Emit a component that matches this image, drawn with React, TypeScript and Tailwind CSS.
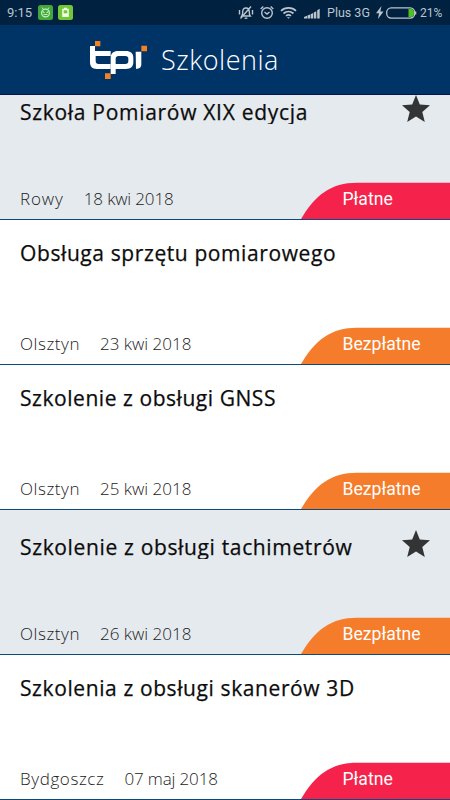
import React from 'react';

interface Training {
  title: string;
  city: string;
  date: string;
  paid: boolean;
  starred: boolean;
  tracking: string;
  cityTracking: string;
  dateTracking: string;
}

const trainings: Training[] = [
  { title: 'Szkoła Pomiarów XIX edycja', city: 'Rowy', date: '18 kwi 2018', paid: true, starred: true, tracking: 'tracking-[0.7px]', cityTracking: 'tracking-[0.9px]', dateTracking: 'tracking-[-0.15px]' },
  { title: 'Obsługa sprzętu pomiarowego', city: 'Olsztyn', date: '23 kwi 2018', paid: false, starred: false, tracking: 'tracking-[0.6px]', cityTracking: 'tracking-[0.55px]', dateTracking: 'tracking-[0px]' },
  { title: 'Szkolenie z obsługi GNSS', city: 'Olsztyn', date: '25 kwi 2018', paid: false, starred: false, tracking: 'tracking-[0.55px]', cityTracking: 'tracking-[0.55px]', dateTracking: 'tracking-[0px]' },
  { title: 'Szkolenie z obsługi tachimetrów', city: 'Olsztyn', date: '26 kwi 2018', paid: false, starred: true, tracking: 'tracking-[0.65px]', cityTracking: 'tracking-[0.55px]', dateTracking: 'tracking-[0px]' },
  { title: 'Szkolenia z obsługi skanerów 3D', city: 'Bydgoszcz', date: '07 maj 2018', paid: true, starred: false, tracking: 'tracking-[0.6px]', cityTracking: 'tracking-[0.6px]', dateTracking: 'tracking-[-0.15px]' },
];

const StatusBar: React.FC = () => (
  <div className="flex h-[25px] shrink-0 items-center bg-[#00213f] pl-[7px] pr-[7px] font-[Roboto,sans-serif] text-[13px] text-[#bcc5ce]">
    <span className="w-[31px] leading-[25px] whitespace-nowrap">9:15</span>
    <svg className="h-[15px] w-[15px]" viewBox="0 0 15 15">
      <rect width="15" height="15" rx="2.5" fill="#43a83c" />
      <path d="M4 2.500l1.500 2M11 2.500L9.500 4.500" stroke="#c9efc4" strokeWidth="1" />
      <circle cx="7.500" cy="8" r="3.900" fill="none" stroke="#c9efc4" strokeWidth="1.200" />
      <path d="M4.500 6.500l2 1.200M10.500 6.500l-2 1.200M5.500 9.500h4" stroke="#c9efc4" strokeWidth="1.100" />
    </svg>
    <svg className="ml-[5px] h-[15px] w-[15px]" viewBox="0 0 15 15">
      <rect width="15" height="15" rx="2.500" fill="#71c837" />
      <path d="M6 2.800h3v1h1.800v8.200H4.200V3.800H6z" fill="#f3fbe9" />
      <rect x="5.700" y="5.300" width="3.600" height="3" fill="#71c837" />
    </svg>

    <div className="ml-auto flex items-center">
      <svg className="h-[15px] w-[16px]" viewBox="0 0 16 15" fill="none" stroke="#bcc5ce" strokeWidth="1.400">
        <path d="M3.800 11c.9-1 .9-2 .9-4C4.700 4.800 6 3 8 3s3.300 1.800 3.300 4c0 2 0 3 .9 4zM6.700 12.800c.7.700 1.900.7 2.600 0M13 1.500l-10.500 12M1.500 5v4.500M14.500 5v4.500" />
      </svg>
      <svg className="ml-[6px] h-[15px] w-[14px]" viewBox="0 0 14 15" fill="none" stroke="#bcc5ce" strokeWidth="1.400">
        <circle cx="7" cy="8" r="5.300" />
        <path d="M4.500 7L7 9l2.500-2M.7 4l2.600-2.400M13.300 4l-2.600-2.400" />
      </svg>
      <svg className="ml-[6px] h-[13px] w-[17px]" viewBox="0 0 17 13" fill="none" stroke="#bcc5ce" strokeWidth="1.700">
        <path d="M1 4.800c4-4 11-4 15 0M3.500 7.500c3-2.600 7-2.600 10 0M6 9.800c1.500-1.200 3.500-1.200 5 0" />
        <path d="M7 11.200h3L8.500 12.800z" fill="#bcc5ce" stroke="none" />
      </svg>
      <svg className="ml-[7px] h-[12px] w-[17px]" viewBox="0 0 17 12" fill="#bcc5ce">
        <path d="M0 11.500V10l3-1.200v2.700zM3.500 8.600l2.500-1v3.900H3.500zM6.600 7.200l2.500-1.200v5.500H6.600zM9.800 5.400l2.500-1.200v7.300H9.800zM13.200 3.300l2.500-1.500v9.700h-2.500z" />
      </svg>
      <span className="ml-[6px] w-[44px] pt-px text-[12.5px] whitespace-nowrap">Plus 3G</span>
      <svg className="ml-[5px] h-[13px] w-[8px]" viewBox="0 0 8 13" fill="#bcc5ce">
        <path d="M5.500 0L0 7.300h3L2 13l5.500-7.500H4.300z" />
      </svg>
      <svg className="ml-[2px] h-[12px] w-[31px]" viewBox="0 0 31 12">
        <rect x=".7" y=".8" width="28" height="10.300" rx="4.500" fill="none" stroke="#bcc5ce" strokeWidth="1.300" />
        <path d="M22.500 2h2.700c1.500 0 2.700 1.200 2.700 2.700v2.500c0 1.500-1.200 2.700-2.700 2.700h-2.700z" fill="#4fc31b" />
        <path d="M29 4.500h1.300v3H29z" fill="#bcc5ce" />
      </svg>
      <span className="ml-[3px] w-[23px] pt-px text-[12px] whitespace-nowrap">21%</span>
    </div>
  </div>
);

const Logo: React.FC = () => (
  <svg className="h-[40px] w-[60px]" viewBox="27 30 180 120">
    <path
      d="M30 48H45V63H92V78H47V93C47 99 50 102 56 102H92V117H50C37 117 30 110 30 97Z"
      fill="#fff"
    />
    <path
      fillRule="evenodd"
      d="M92 132V85C92 70 100 63 115 63H137C152 63 160 70 160 83V97C160 110 152 117 138 117H107V132ZM107 102H136C142 102 145 99 145 94V86C145 81 142 78 136 78H116C110 78 107 81 107 86Z"
      fill="#fff"
    />
    <path d="M167 65H184V103C184 112 179 117 168 117Z" fill="#fff" />
    <path d="M45 33h16v16H45zM184 47h17v17h-17zM75 130h17v17H75z" fill="#f58220" />
  </svg>
);

const Header: React.FC = () => (
  <header className="flex h-[70px] shrink-0 items-center border-b border-[#00164d] bg-[#003366] pl-[89px]">
    <Logo />
    <h1 className="ml-[12px] font-['Open_Sans',sans-serif] text-[27px] leading-[40px] font-light tracking-[0.5px] text-white">
      Szkolenia
    </h1>
  </header>
);

const Tag: React.FC<{ paid: boolean }> = ({ paid }) => (
  <div className="relative h-[37px] w-[149px]">
    <svg className="absolute inset-0" width="149" height="37" viewBox="0 0 149 37">
      <path d="M0 37C14 13 30 .7 56 .7H149V37Z" fill={paid ? '#f5234b' : '#f57c2a'} />
    </svg>
    <span className="relative block pl-[41.5px] font-[Roboto,sans-serif] text-[17.6px] leading-[35px] text-white">
      {paid ? 'Płatne' : 'Bezpłatne'}
    </span>
  </div>
);

const TrainingRow: React.FC<{ item: Training }> = ({ item }) => (
  <li
    className={`flex h-[145px] shrink-0 flex-col justify-between border-b border-[#0b4a7a] ${
      item.starred ? 'bg-[#e5eaee]' : 'bg-white'
    }`}
  >
    <div className={`flex justify-between pl-[20px] pr-[20px] ${item.starred ? 'pt-[20px]' : 'pt-[16px]'}`}>
      <h2
        className={`overflow-hidden font-['Open_Sans',sans-serif] text-[21px] leading-[34px] font-medium whitespace-nowrap text-[#0c0c0c] [-webkit-text-stroke:0.25px_#0c0c0c] ${item.tracking} ${
          item.starred ? 'h-[29px]' : 'h-[34px]'
        }`}
      >
        {item.title}
      </h2>
      {item.starred && (
        <svg className="h-[28px] w-[28px]" viewBox="0 0 28 28" fill="#333436">
          <path d="M14 0l3.800 9.400L28 10.200l-7.700 6.700L22.800 27 14 21.600 5.200 27l2.500-10.100L0 10.200l10.200-.8z" />
        </svg>
      )}
    </div>
    <div className="flex items-start justify-between pl-[20px]">
      <div className="flex gap-[20px] font-['Open_Sans',sans-serif] text-[17px] leading-[34px] font-light text-[#222]">
        <span className={item.cityTracking}>{item.city}</span>
        <span className={item.dateTracking}>{item.date}</span>
      </div>
      <Tag paid={item.paid} />
    </div>
  </li>
);

export default function App() {
  return (
    <div className="flex h-[800px] w-[450px] flex-col overflow-hidden bg-white">
      <StatusBar />
      <Header />
      <main className="flex-1 overflow-hidden">
        <ul className="-mt-[20px] flex flex-col">
          {trainings.map((item) => (
            <TrainingRow key={item.title} item={item} />
          ))}
        </ul>
      </main>
    </div>
  );
}
